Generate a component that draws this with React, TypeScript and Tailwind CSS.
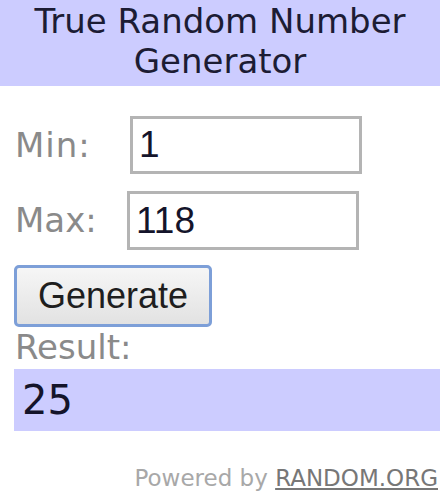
import React, { useState } from 'react';

const sans = { fontFamily: '"DejaVu Sans", Verdana, sans-serif' };

export default function App() {
  const [min, setMin] = useState('1');
  const [max, setMax] = useState('118');
  const [result, setResult] = useState('25');

  const generate = () => {
    const lo = parseInt(min, 10);
    const hi = parseInt(max, 10);
    if (isNaN(lo) || isNaN(hi) || hi < lo) return;
    setResult(String(lo + Math.floor(Math.random() * (hi - lo + 1))));
  };

  return (
    <div className="w-[442px] h-[500px] bg-white font-['DejaVu_Sans',Verdana,sans-serif]">
      <div className="w-[440px] h-[86px] bg-[#ccccff] pt-px text-center text-[34px] leading-[40px] text-[#1c1c34]">
        True Random Number
        <br />
        Generator
      </div>

      <div className="flex items-center mt-[30px] pl-[15px]">
        <span className="w-[115px] text-[34px] text-[#8a8a8a] tracking-[1px]">Min:</span>
        <input
          value={min}
          onChange={(e) => setMin(e.target.value)}
          className="w-[232px] h-[58px] border-[3px] border-[#b4b4b4] px-[6px] text-[37px] text-[#14142a] font-['Liberation_Sans',Arial,sans-serif] outline-none"
        />
      </div>

      <div className="flex items-center mt-[17px] pl-[15px]">
        <span className="w-[112px] text-[34px] text-[#8a8a8a]">Max:</span>
        <input
          value={max}
          onChange={(e) => setMax(e.target.value)}
          className="w-[232px] h-[59px] border-[3px] border-[#b4b4b4] px-[6px] text-[37px] text-[#14142a] font-['Liberation_Sans',Arial,sans-serif] outline-none"
        />
      </div>

      <button
        onClick={generate}
        className="block ml-[14px] mt-[15px] w-[198px] h-[62px] rounded-[5px] border-[3px] border-[#7d9fd8] bg-gradient-to-b from-[#f6f6f6] to-[#e2e2e2] text-[36px] text-[#1e1e1e] font-['Liberation_Sans',Arial,sans-serif]"
      >
        Generate
      </button>

      <div className="pl-[15px] h-[42px] text-[34px] leading-[40px] text-[#8a8a8a]">Result:</div>

      <div className="ml-[14px] w-[426px] h-[62px] bg-[#ccccff] pl-[8px] flex items-center text-[40px] text-[#14142a]" style={sans}>
        {result}
      </div>

      <div className="mt-[30px] pr-[4px] text-right text-[23px] text-[#a8a8a8]">
        Powered by{' '}
        <a href="#" className="text-[#777777] underline">
          RANDOM.ORG
        </a>
      </div>
    </div>
  );
}
